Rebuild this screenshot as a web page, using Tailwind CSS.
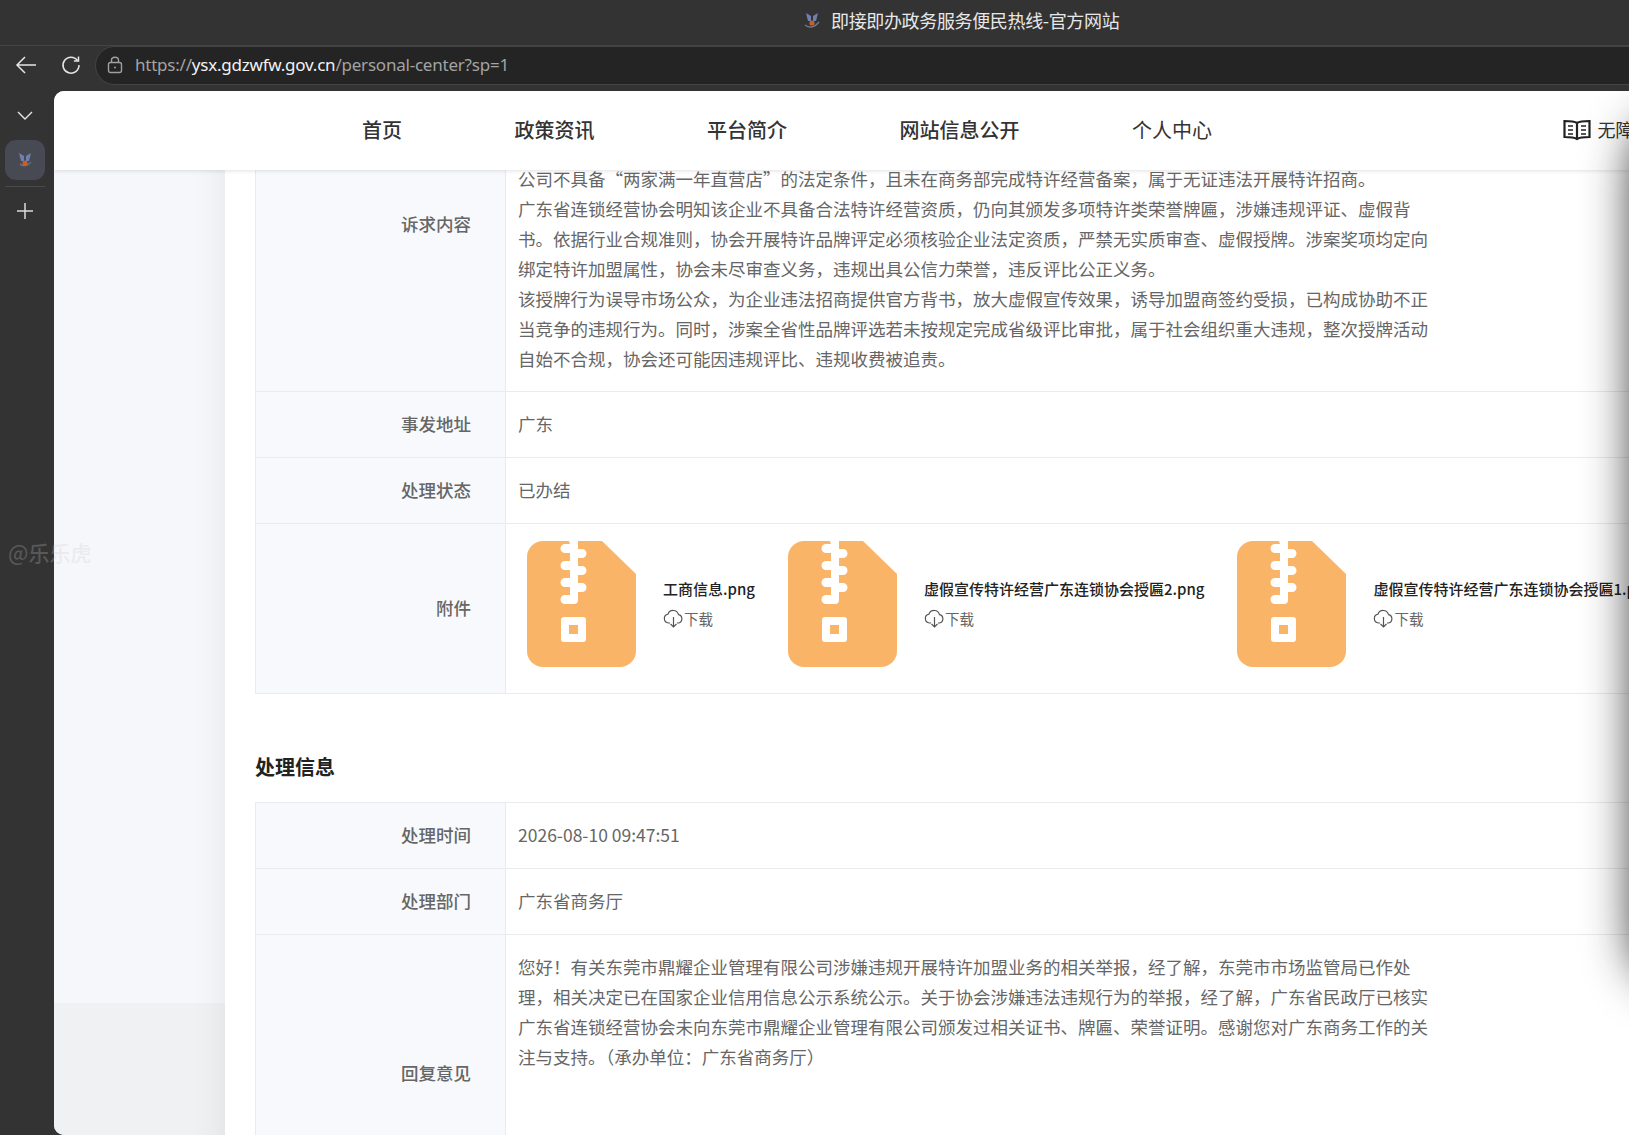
<!DOCTYPE html>
<html lang="zh-CN">
<head>
    <meta charset="UTF-8">
    <meta name="viewport" content="width=device-width, initial-scale=1.0">
    <title>即接即办政务服务便民热线-官方网站</title>
    <script src="https://cdn.jsdelivr.net/npm/@tailwindcss/browser@4"></script>
</head>
<body class="relative w-[1629px] h-[1135px] overflow-hidden flex flex-col bg-[#333333] font-['Noto_Sans','Noto_Sans_CJK_SC',sans-serif]">

    <!-- window title -->
    <div class="h-[46px] shrink-0 flex items-center pb-[6px] pl-[803px] gap-[10px] border-b border-[#444444]">
        <svg class="w-[18px] h-[20px]" viewBox="0 0 18 20">
            <path d="M3 3l5 3v5H5z" fill="#6f7fb0"/>
            <path d="M15 3l-5 3v5h3z" fill="#6f7fb0"/>
            <path d="M2 15c4 3 9 3 14-3" fill="none" stroke="#70788c" stroke-width="1.5"/>
            <circle cx="9" cy="13" r="2.6" fill="#c2622a"/>
        </svg>
        <span class="text-[18px] leading-none text-[#e8e8e8] tracking-[-0.35px] font-['Noto_Sans_CJK_SC',sans-serif]">即接即办政务服务便民热线-官方网站</span>
    </div>

    <!-- address row -->
    <div class="h-[45px] shrink-0 flex items-start">
        <div class="w-[95px] h-[38px] shrink-0 flex items-center pl-[15px] gap-[24px]">
            <svg class="w-[22px] h-[20px]" viewBox="0 0 22 20" fill="none" stroke="#e6e6e6" stroke-width="1.5">
                <path d="M21 10H2M10 2l-8 8 8 8"/>
            </svg>
            <svg class="w-[20px] h-[20px]" viewBox="0 0 20 20" fill="none" stroke="#e6e6e6" stroke-width="1.5">
                <path d="M16.5 5.5A8 8 0 1 0 18 10"/>
                <path d="M17.5 1.5v4.600h-4.600"/>
            </svg>
        </div>
        <div class="w-[1600px] h-[39px] shrink-0 flex items-center pl-[11px] pb-[2px] gap-[12px] rounded-l-[20px] bg-[#242424] border border-[#444444]">
            <svg class="w-[16px] h-[18px]" viewBox="0 0 16 18" fill="none" stroke="#a0a0a0" stroke-width="1.4">
                <rect x="1.5" y="6.5" width="13" height="10" rx="2"/>
                <path d="M4.5 6.5V4.2a3.5 3 0 0 1 7 0v2.300"/>
                <circle cx="8" cy="11.500" r="1" fill="#a0a0a0" stroke="none"/>
            </svg>
            <span class="text-[17px] leading-none tracking-[-0.22px] text-[#a3a3a3] whitespace-nowrap">https://<span class="text-[#f2f2f2]">ysx.gdzwfw.gov.cn</span>/personal-center?sp=1</span>
        </div>
    </div>

    <div class="flex-1 flex min-h-0">
        <!-- side strip -->
        <div class="w-[54px] shrink-0 flex flex-col items-center pr-[4px]">
            <svg class="w-[18px] h-[12px] mt-[19px]" viewBox="0 0 18 12" fill="none" stroke="#e6e6e6" stroke-width="1.4">
                <path d="M2 2l7 7 7-7"/>
            </svg>
            <div class="w-[40px] h-[40px] mt-[18px] rounded-[11px] bg-[#474a53] flex items-center justify-center">
                <svg class="w-[18px] h-[20px]" viewBox="0 0 18 20">
                    <path d="M3 3l5 3v5H5z" fill="#6f7fb0"/>
                    <path d="M15 3l-5 3v5h3z" fill="#6f7fb0"/>
                    <path d="M4 14c3 3 8 2 11-2" fill="none" stroke="#70788c" stroke-width="1.2"/>
                    <circle cx="9" cy="13" r="2.600" fill="#c2622a"/>
                </svg>
            </div>
            <div class="w-[40px] mt-[6px] border-t border-[#4a4a4a]"></div>
            <svg class="w-[20px] h-[20px] mt-[14px]" viewBox="0 0 20 20" fill="none" stroke="#dcdcdc" stroke-width="1.500">
                <path d="M10 2v16M2 10h16"/>
            </svg>
        </div>

        <!-- page -->
        <div class="relative flex-1 min-w-0 flex flex-col overflow-hidden rounded-tl-[10px] rounded-bl-[10px] bg-white">
            <nav class="relative z-10 h-[79px] shrink-0 flex items-center pb-[2px] pl-[308px] gap-[112.5px] bg-white shadow-[0_1px_4px_rgba(0,0,0,0.12)] text-[20px] text-[#333333] whitespace-nowrap font-['Noto_Sans_CJK_SC',sans-serif]">
                <span class="font-medium">首页</span>
                <span class="font-medium">政策资讯</span>
                <span class="font-medium">平台简介</span>
                <span class="font-medium">网站信息公开</span>
                <span>个人中心</span>
                <span class="flex items-center gap-[7px] ml-[238px] text-[18px]">
                    <svg class="w-[28px] h-[22px]" viewBox="0 0 28 22" fill="none" stroke="#222222" stroke-width="2.200">
                        <path d="M14 4C11 2 6 2 1.500 2v16c4.500 0 9.500 0 12.500 2 3-2 8-2 12.500-2V2C22 2 17 2 14 4zM14 4v16"/>
                        <path d="M5 7h5M5 11h5M5 15h5M18 7h5M18 11h5M18 15h5" stroke-width="1.600"/>
                    </svg>
                    无障碍
                </span>
            </nav>

            <div class="flex-1 min-h-0 flex">
                <div class="w-[171px] shrink-0 flex flex-col">
                    <div class="h-[833px] shrink-0 bg-[#f5f7fb]"></div>
                    <div class="flex-1 bg-[#eff1f3]"></div>
                </div>

                <!-- detail card -->
                <div class="relative w-[1500px] shrink-0 -mt-[113px] h-[1200px] pl-[30px] bg-white shadow-[0_0_36px_rgba(0,0,0,0.08)] text-[17.5px] text-[#666666] font-['Noto_Sans_CJK_SC',sans-serif]">
                    <div class="w-[1470px] border-l border-[#e9ebef]">
                        <div class="h-[335px] flex border-b border-[#e9ebef]">
                            <div class="w-[250px] shrink-0 flex items-center justify-end pr-[34px] bg-[#f7f9fc] border-r border-[#e9ebef] font-medium">诉求内容</div>
                            <div class="flex flex-col justify-end pl-[12px] pb-[17.5px] leading-[30px]">
                                <p class="w-[912px]">公司不具备“两家满一年直营店”的法定条件，且未在商务部完成特许经营备案，属于无证违法开展特许招商。</p>
                                <p class="w-[912px]">广东省连锁经营协会明知该企业不具备合法特许经营资质，仍向其颁发多项特许类荣誉牌匾，涉嫌违规评证、虚假背书。依据行业合规准则，协会开展特许品牌评定必须核验企业法定资质，严禁无实质审查、虚假授牌。涉案奖项均定向绑定特许加盟属性，协会未尽审查义务，违规出具公信力荣誉，违反评比公正义务。</p>
                                <p class="w-[912px]">该授牌行为误导市场公众，为企业违法招商提供官方背书，放大虚假宣传效果，诱导加盟商签约受损，已构成协助不正当竞争的违规行为。同时，涉案全省性品牌评选若未按规定完成省级评比审批，属于社会组织重大违规，整次授牌活动自始不合规，协会还可能因违规评比、违规收费被追责。</p>
                            </div>
                        </div>
                        <div class="h-[66px] flex border-b border-[#e9ebef]">
                            <div class="w-[250px] shrink-0 flex items-center justify-end pr-[34px] bg-[#f7f9fc] border-r border-[#e9ebef] font-medium">事发地址</div>
                            <div class="flex items-center pl-[12px]">广东</div>
                        </div>
                        <div class="h-[66px] flex border-b border-[#e9ebef]">
                            <div class="w-[250px] shrink-0 flex items-center justify-end pr-[34px] bg-[#f7f9fc] border-r border-[#e9ebef] font-medium">处理状态</div>
                            <div class="flex items-center pl-[12px]">已办结</div>
                        </div>
                        <div class="h-[170px] flex border-b border-[#e9ebef]">
                            <div class="w-[250px] shrink-0 flex items-center justify-end pr-[34px] bg-[#f7f9fc] border-r border-[#e9ebef] font-medium">附件</div>
                            <div class="flex items-start pl-[21px] pt-[17px] gap-[33px] whitespace-nowrap">
                                <div class="flex gap-[27px]">
                                    <svg class="w-[109px] h-[126px] shrink-0" viewBox="0 0 109 126">
                                        <path d="M16 0h59l34 33v77a16 16 0 0 1-16 16H16a16 16 0 0 1-16-16V16A16 16 0 0 1 16 0z" fill="#f9b468"/>
                                        <path d="M42 0h9v8h4a4.500 4.500 0 0 1 0 9h-4v8h4a4.500 4.500 0 0 1 0 9h-4v8h4a4.500 4.500 0 0 1 0 9h-4v8a4 4 0 0 1-4 4h-9a4.500 4.500 0 0 1 0-9h5v-8h-5a4.500 4.500 0 0 1 0-9h5v-8h-5a4.500 4.500 0 0 1 0-9h5v-8h-5a4.500 4.500 0 0 1 0-9h5z" fill="#fff"/>
                                        <path fill-rule="evenodd" d="M37 76h19a3 3 0 0 1 3 3v19a3 3 0 0 1-3 3H37a3 3 0 0 1-3-3V79a3 3 0 0 1 3-3zm5 8v9h9v-9z" fill="#fff"/>
                                    </svg>
                                    <div class="pt-[36px]">
                                        <div class="text-[15px] font-medium leading-[24px] text-[#222222]">工商信息.png</div>
                                        <div class="mt-[8px] flex items-center text-[14.5px] leading-[20px] text-[#666666]">
                                            <svg class="w-[21px] h-[20px]" viewBox="0 0 21 20" fill="none" stroke="#555555" stroke-width="1.200">
                                                <path d="M7 14H5.500a4.500 4.500 0 0 1-.5-8.900 5.500 5.500 0 0 1 10.500.5A4.300 4.300 0 0 1 15.500 14H14"/>
                                                <path d="M10.500 8v10M7.500 15l3 3 3-3"/>
                                            </svg>
                                            下载
                                        </div>
                                    </div>
                                </div>
                                <div class="flex gap-[27px]">
                                    <svg class="w-[109px] h-[126px] shrink-0" viewBox="0 0 109 126">
                                        <path d="M16 0h59l34 33v77a16 16 0 0 1-16 16H16a16 16 0 0 1-16-16V16A16 16 0 0 1 16 0z" fill="#f9b468"/>
                                        <path d="M42 0h9v8h4a4.500 4.500 0 0 1 0 9h-4v8h4a4.500 4.500 0 0 1 0 9h-4v8h4a4.500 4.500 0 0 1 0 9h-4v8a4 4 0 0 1-4 4h-9a4.500 4.500 0 0 1 0-9h5v-8h-5a4.500 4.500 0 0 1 0-9h5v-8h-5a4.500 4.500 0 0 1 0-9h5v-8h-5a4.500 4.500 0 0 1 0-9h5z" fill="#fff"/>
                                        <path fill-rule="evenodd" d="M37 76h19a3 3 0 0 1 3 3v19a3 3 0 0 1-3 3H37a3 3 0 0 1-3-3V79a3 3 0 0 1 3-3zm5 8v9h9v-9z" fill="#fff"/>
                                    </svg>
                                    <div class="pt-[36px]">
                                        <div class="text-[15px] font-medium leading-[24px] text-[#222222]">虚假宣传特许经营广东连锁协会授匾2.png</div>
                                        <div class="mt-[8px] flex items-center text-[14.5px] leading-[20px] text-[#666666]">
                                            <svg class="w-[21px] h-[20px]" viewBox="0 0 21 20" fill="none" stroke="#555555" stroke-width="1.200">
                                                <path d="M7 14H5.500a4.500 4.500 0 0 1-.5-8.900 5.500 5.500 0 0 1 10.500.5A4.300 4.300 0 0 1 15.500 14H14"/>
                                                <path d="M10.500 8v10M7.500 15l3 3 3-3"/>
                                            </svg>
                                            下载
                                        </div>
                                    </div>
                                </div>
                                <div class="flex gap-[27px]">
                                    <svg class="w-[109px] h-[126px] shrink-0" viewBox="0 0 109 126">
                                        <path d="M16 0h59l34 33v77a16 16 0 0 1-16 16H16a16 16 0 0 1-16-16V16A16 16 0 0 1 16 0z" fill="#f9b468"/>
                                        <path d="M42 0h9v8h4a4.500 4.500 0 0 1 0 9h-4v8h4a4.500 4.500 0 0 1 0 9h-4v8h4a4.500 4.500 0 0 1 0 9h-4v8a4 4 0 0 1-4 4h-9a4.500 4.500 0 0 1 0-9h5v-8h-5a4.500 4.500 0 0 1 0-9h5v-8h-5a4.500 4.500 0 0 1 0-9h5v-8h-5a4.500 4.500 0 0 1 0-9h5z" fill="#fff"/>
                                        <path fill-rule="evenodd" d="M37 76h19a3 3 0 0 1 3 3v19a3 3 0 0 1-3 3H37a3 3 0 0 1-3-3V79a3 3 0 0 1 3-3zm5 8v9h9v-9z" fill="#fff"/>
                                    </svg>
                                    <div class="pt-[36px]">
                                        <div class="text-[15px] font-medium leading-[24px] text-[#222222]">虚假宣传特许经营广东连锁协会授匾1.png</div>
                                        <div class="mt-[8px] flex items-center text-[14.5px] leading-[20px] text-[#666666]">
                                            <svg class="w-[21px] h-[20px]" viewBox="0 0 21 20" fill="none" stroke="#555555" stroke-width="1.200">
                                                <path d="M7 14H5.500a4.500 4.500 0 0 1-.5-8.900 5.500 5.500 0 0 1 10.500.5A4.300 4.300 0 0 1 15.500 14H14"/>
                                                <path d="M10.500 8v10M7.500 15l3 3 3-3"/>
                                            </svg>
                                            下载
                                        </div>
                                    </div>
                                </div>
                            </div>
                        </div>
                    </div>

                    <h2 class="h-[108px] pt-[55px] text-[20px] leading-[36px] font-bold text-[#222222]">处理信息</h2>

                    <div class="w-[1470px] border-l border-t border-[#e9ebef]">
                        <div class="h-[66px] flex border-b border-[#e9ebef]">
                            <div class="w-[250px] shrink-0 flex items-center justify-end pr-[34px] bg-[#f7f9fc] border-r border-[#e9ebef] font-medium">处理时间</div>
                            <div class="flex items-center pl-[12px]">2026-08-10 09:47:51</div>
                        </div>
                        <div class="h-[66px] flex border-b border-[#e9ebef]">
                            <div class="w-[250px] shrink-0 flex items-center justify-end pr-[34px] bg-[#f7f9fc] border-r border-[#e9ebef] font-medium">处理部门</div>
                            <div class="flex items-center pl-[12px]">广东省商务厅</div>
                        </div>
                        <div class="h-[278px] flex border-b border-[#e9ebef]">
                            <div class="w-[250px] shrink-0 flex items-center justify-end pr-[34px] bg-[#f7f9fc] border-r border-[#e9ebef] font-medium">回复意见</div>
                            <div class="pl-[12px] pt-[17px] leading-[30px]">
                                <p class="w-[912px]">您好！有关东莞市鼎耀企业管理有限公司涉嫌违规开展特许加盟业务的相关举报，经了解，东莞市市场监管局已作处理，相关决定已在国家企业信用信息公示系统公示。关于协会涉嫌违法违规行为的举报，经了解，广东省民政厅已核实广东省连锁经营协会未向东莞市鼎耀企业管理有限公司颁发过相关证书、牌匾、荣誉证明。感谢您对广东商务工作的关注与支持。（承办单位：广东省商务厅）</p>
                            </div>
                        </div>
                    </div>
                </div>
            </div>

            <!-- shadow of the side panel that sits past the right edge -->
            <div class="absolute z-20 left-[1582px] top-[30px] w-[80px] h-[860px] rounded-[40px] bg-[#777777] shadow-[0_0_50px_rgba(0,0,0,0.9)]"></div>
        </div>
    </div>

    <!-- watermark -->
    <div class="absolute z-30 left-[8px] top-[538px] text-[21px] leading-[28px] text-[#c8c8c8]/25 font-medium whitespace-nowrap font-['Noto_Sans_CJK_SC',sans-serif]">@乐乐虎</div>
</body>
</html>
